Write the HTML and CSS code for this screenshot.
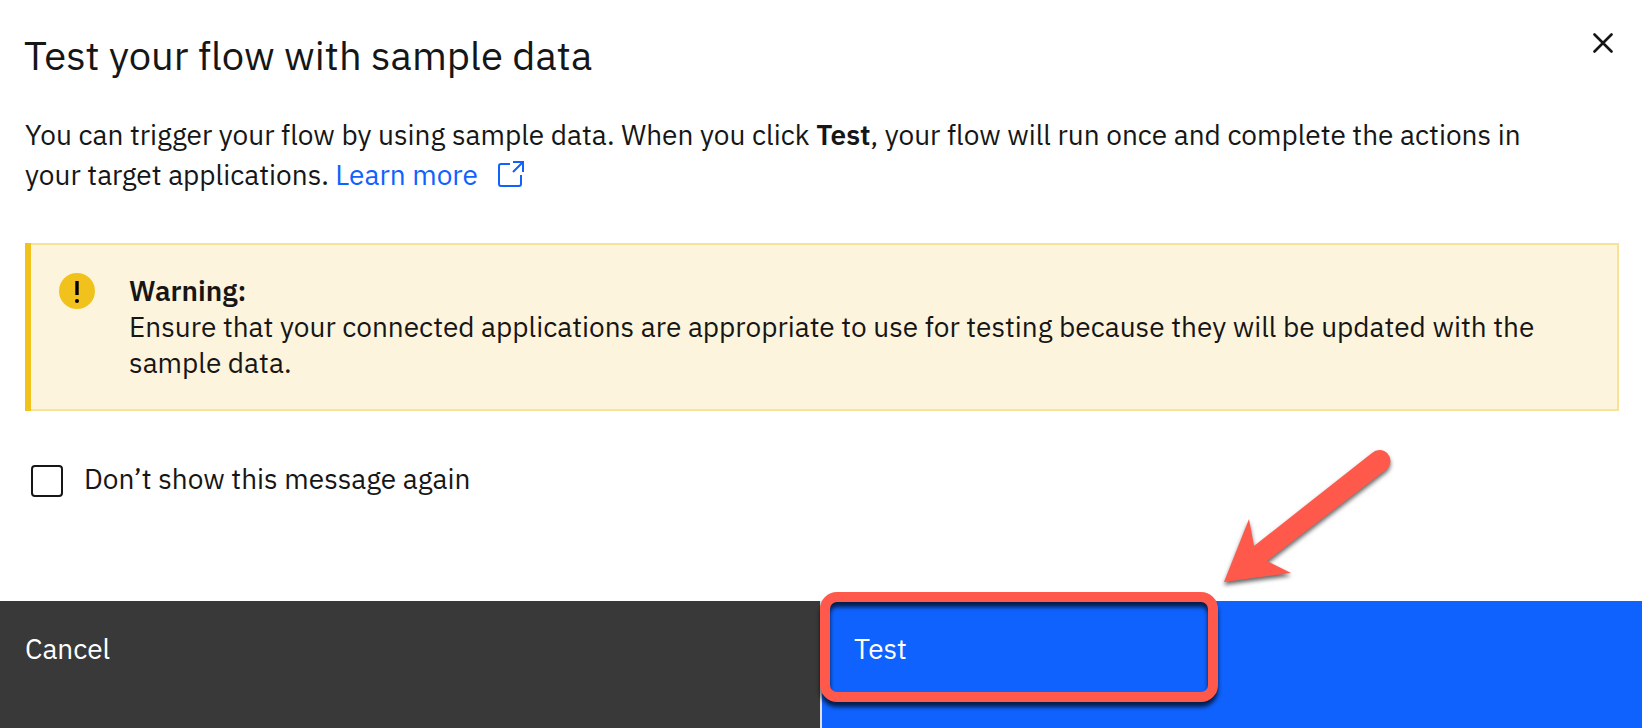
FILE: index.html
```html
<!DOCTYPE html>
<html lang="en">
<head>
<meta charset="utf-8">
<title>Test your flow with sample data</title>
<link rel="stylesheet" href="styles.css">
</head>
<body>
<main class="modal">
  <header class="modal-header">
    <h1 class="title">Test your flow with sample data</h1>
    <button class="close" type="button" aria-label="Close">
      <svg viewBox="0 0 20 20" width="20" height="20" aria-hidden="true"><path d="M1.500 1.500L18.500 18.500M18.500 1.500L1.500 18.500"/></svg>
    </button>
  </header>
  <section class="modal-body">
    <p class="intro">You can trigger your flow by using sample data. When you click <strong>Test</strong>, your flow will run once and complete the actions in your target applications. <a class="link" href="#">Learn more<svg class="launch" viewBox="0 0 28 28" width="28" height="28" aria-hidden="true"><path d="M13 4H4Q2 4 2 6V24Q2 26 4 26H22Q24 26 24 24V15M16 2H26V12M26 2L16 12"/></svg></a></p>
    <div class="warning" role="alert">
      <svg class="warning-icon" viewBox="0 0 36 36" width="36" height="36" aria-hidden="true"><circle class="disc" cx="18" cy="18" r="18"/><path d="M16.300 8H19.700V22H16.300z"/><circle cx="18" cy="28" r="2"/></svg>
      <div class="warning-text">
        <strong>Warning:</strong>
        <p>Ensure that your connected applications are appropriate to use for testing because they will be updated with the sample data.</p>
      </div>
    </div>
    <label class="option"><input class="checkbox" type="checkbox"><span>Don’t show this message again</span></label>
  </section>
  <footer class="actions">
    <button class="btn cancel" type="button">Cancel</button>
    <button class="btn test" type="button">Test<span class="highlight"></span></button>
  </footer>
  <svg class="arrow" viewBox="0 0 180 150" width="180" height="150" aria-hidden="true"><path d="M4 142L29 79L34 106L152 13A10 10 0 0 1 167 29L47 121L71 133Z"/></svg>
</main>
</body>
</html>
```
FILE: styles.css
```css
* { box-sizing: border-box; }
body {
  margin: 0;
  background: #fff;
  color: #161616;
  font: 28px/40px "IBM Plex Sans", "Open Sans", sans-serif;
}
h1, p { margin: 0; }
strong { font-weight: 600; }
button { font: inherit; border: 0; cursor: pointer; }
.modal {
  position: relative;
  display: flex;
  flex-direction: column;
  min-height: 100vh;
}
.modal-header {
  display: flex;
  align-items: flex-start;
  justify-content: space-between;
  padding: 27px 29px 0 24px;
}
.title { font-size: 40px; line-height: 56px; font-weight: 400; }
.close { display: flex; padding: 6px 0; background: none; }
.close path { fill: none; stroke: #161616; stroke-width: 2.600; stroke-linecap: round; }
.modal-body { flex: 1; padding: 32px 23px 0 25px; }
.intro { padding-right: 64px; }
.link { color: #0f62fe; text-decoration: none; }
.launch { margin-left: 19px; vertical-align: -3px; }
.launch path { fill: none; stroke: #0f62fe; stroke-width: 2; }
.warning {
  display: flex;
  gap: 34px;
  margin-top: 48px;
  padding: 30px 38px 30px 28px;
  border-left: 6px solid #f1c21b;
  box-shadow: inset -2px 2px #f8e296, inset 0 -2px #f8e296;
  background: #fdf4dd;
  line-height: 36px;
}
.warning-icon { flex: none; }
.warning-icon .disc { fill: #f1c21b; }
.warning-text strong { display: block; }
.option { display: inline-flex; align-items: flex-start; gap: 21px; margin-top: 48px; padding-left: 6px; }
.checkbox {
  appearance: none;
  width: 32px;
  height: 32px;
  margin: 6px 0 0;
  border: 2px solid #161616;
  border-radius: 4px;
}
.checkbox:checked { background: #161616; }
.actions {
  display: grid;
  grid-template-columns: 1fr 1fr;
  gap: 2px;
  height: 127px;
  background: #e0e0e0;
}
.btn {
  position: relative;
  display: flex;
  padding: 28px 32px;
  color: #fff;
  text-align: left;
}
.cancel { padding-left: 25px; background: #393939; }
.test { background: #0f62fe; }
.highlight {
  position: absolute;
  left: -2px;
  top: -9px;
  width: 398px;
  height: 110px;
  border: 10px solid #ff594c;
  border-radius: 17px;
  filter: drop-shadow(0 5px 2px rgba(0, 0, 0, 0.7));
  pointer-events: none;
}
.arrow {
  position: absolute;
  left: 1220px;
  top: 440px;
  overflow: visible;
  filter: drop-shadow(0 3px 2px rgba(0, 0, 0, 0.6));
  pointer-events: none;
}
.arrow path { fill: #ff594c; }
```
